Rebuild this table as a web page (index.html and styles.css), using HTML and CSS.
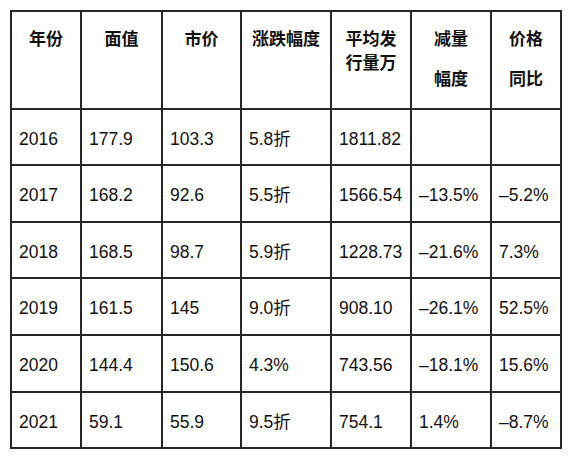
FILE: index.html
```html
<!DOCTYPE html>
<html lang="zh">
<head>
<meta charset="utf-8">
<title>发行数据</title>
<link rel="stylesheet" href="styles.css">
</head>
<body>
<div class="table">
  <div class="th">年份</div>
  <div class="th">面值</div>
  <div class="th">市价</div>
  <div class="th">涨跌幅度</div>
  <div class="th">平均发<br>行量万</div>
  <div class="th"><span class="para">减量</span><span class="para">幅度</span></div>
  <div class="th"><span class="para">价格</span><span class="para">同比</span></div>

  <div class="td">2016</div><div class="td">177.9</div><div class="td">103.3</div><div class="td">5.8折</div><div class="td">1811.82</div><div class="td"></div><div class="td"></div>
  <div class="td">2017</div><div class="td">168.2</div><div class="td">92.6</div><div class="td">5.5折</div><div class="td">1566.54</div><div class="td">–13.5%</div><div class="td">–5.2%</div>
  <div class="td">2018</div><div class="td">168.5</div><div class="td">98.7</div><div class="td">5.9折</div><div class="td">1228.73</div><div class="td">–21.6%</div><div class="td">7.3%</div>
  <div class="td">2019</div><div class="td">161.5</div><div class="td">145</div><div class="td">9.0折</div><div class="td">908.10</div><div class="td">–26.1%</div><div class="td">52.5%</div>
  <div class="td">2020</div><div class="td">144.4</div><div class="td">150.6</div><div class="td">4.3%</div><div class="td">743.56</div><div class="td">–18.1%</div><div class="td">15.6%</div>
  <div class="td">2021</div><div class="td">59.1</div><div class="td">55.9</div><div class="td">9.5折</div><div class="td">754.1</div><div class="td">1.4%</div><div class="td">–8.7%</div>
</div>
</body>
</html>
```
FILE: styles.css
```css
html, body {
  margin: 0;
  padding: 0;
  background: #ffffff;
}

body {
  font-family: "Liberation Sans", "Noto Sans CJK SC", sans-serif;
  color: #111111;
}

.table {
  display: grid;
  grid-template-columns: 68px 79px 77px 88px 78px 78px 68px;
  grid-template-rows: 96px 54px 55px 54px 55px 55px 54px;
  gap: 2px;
  padding: 2px;
  margin: 10px;
  width: max-content;
  background: #262626;
}

.th {
  background: #ffffff;
  font-size: 17px;
  font-weight: bold;
  line-height: 24px;
  text-align: center;
  padding-top: 16px;
}

.th .para {
  display: block;
  margin-bottom: 16px;
}

.td {
  background: #ffffff;
  font-size: 17.5px;
  line-height: 20px;
  display: flex;
  align-items: center;
  padding-left: 7px;
  padding-top: 3px;
}
```
